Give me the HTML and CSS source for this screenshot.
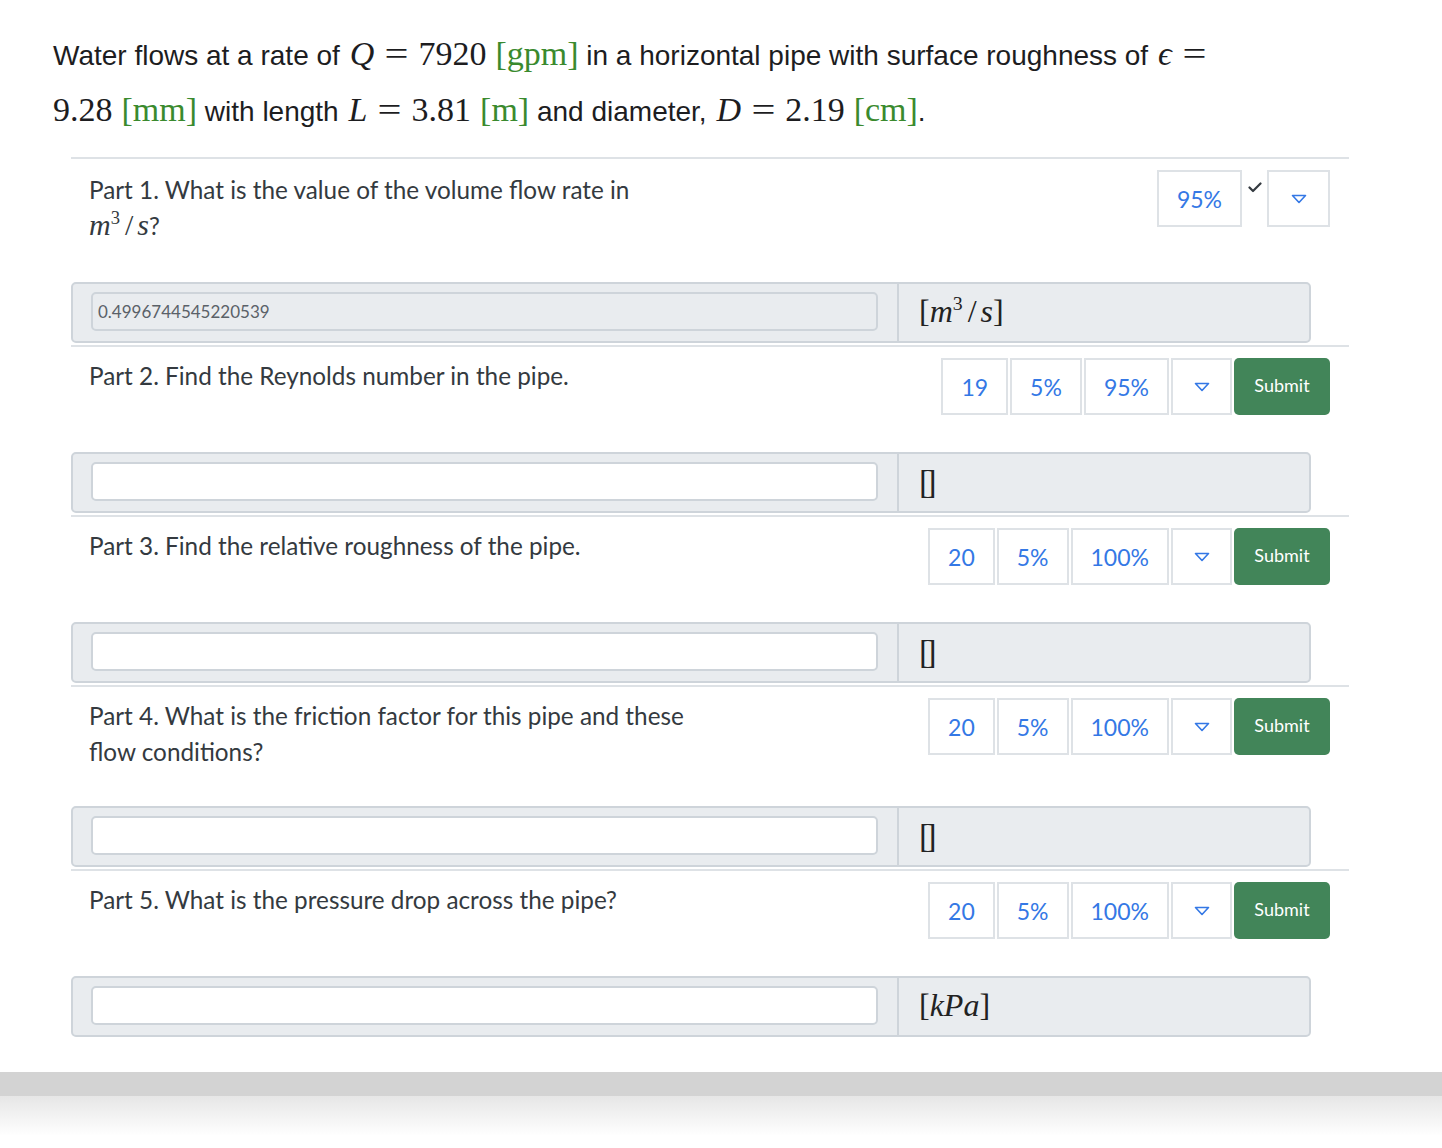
FILE: index.html
```html
<!DOCTYPE html>
<html>
<head>
<meta charset="utf-8">
<link rel="stylesheet" href="styles.css">
</head>
<body>
<div class="page">
  <p class="problem">Water flows at a rate of <span class="m"><i>Q</i><span class="op">=</span>7920<span class="sp"></span><span class="u">[gpm]</span></span> in a horizontal pipe with surface roughness of <span class="m"><i>ϵ</i><span class="op">=</span></span><br><span class="m">9.28<span class="sp"></span><span class="u">[mm]</span></span> with length <span class="m"><i>L</i><span class="op">=</span>3.81<span class="sp"></span><span class="u">[m]</span></span> and diameter, <span class="m"><i>D</i><span class="op">=</span>2.19<span class="sp"></span><span class="u">[cm]</span></span>.</p>

  <div class="parts">
    <section class="part">
      <div class="head">
        <div class="q q1">Part 1. What is the value of the volume flow rate in<br><span class="qm"><i>m</i><sup>3</sup><span class="sl">/</span><i>s</i></span>?</div>
        <div class="ctrl">
          <span class="cell">95%</span>
          <svg class="check" width="14" height="11" viewBox="0 0 14 11"><polyline points="1.5,5.5 5,9 12.5,1.5" fill="none" stroke="#343a40" stroke-width="2.2" stroke-linecap="round" stroke-linejoin="round"/></svg>
          <span class="cell dd"><svg width="16" height="10" viewBox="0 0 16 10"><polygon points="1.5,1.5 14.5,1.5 8,8.5" fill="none" stroke="#3478e5" stroke-width="1.6" stroke-linejoin="round"/></svg></span>
        </div>
      </div>
      <div class="ig">
        <div class="ig-left"><div class="inp dis">0.4996744545220539</div></div>
        <div class="ig-unit"><span class="um">[<i>m</i><sup>3</sup><span class="sl">/</span><i>s</i>]</span></div>
      </div>
    </section>

    <section class="part">
      <div class="head">
        <div class="q">Part 2. Find the Reynolds number in the pipe.</div>
        <div class="ctrl">
          <span class="cell grp">19</span><span class="cell grp">5%</span><span class="cell grp">95%</span><span class="cell grp dd2"><svg width="16" height="10" viewBox="0 0 16 10"><polygon points="1.5,1.5 14.5,1.5 8,8.5" fill="none" stroke="#3478e5" stroke-width="1.6" stroke-linejoin="round"/></svg></span><button class="submit">Submit</button>
        </div>
      </div>
      <div class="ig">
        <div class="ig-left"><div class="inp"></div></div>
        <div class="ig-unit"><span class="um empty">[]</span></div>
      </div>
    </section>

    <section class="part">
      <div class="head">
        <div class="q">Part 3. Find the relative roughness of the pipe.</div>
        <div class="ctrl">
          <span class="cell grp">20</span><span class="cell grp">5%</span><span class="cell grp">100%</span><span class="cell grp dd2"><svg width="16" height="10" viewBox="0 0 16 10"><polygon points="1.5,1.5 14.5,1.5 8,8.5" fill="none" stroke="#3478e5" stroke-width="1.6" stroke-linejoin="round"/></svg></span><button class="submit">Submit</button>
        </div>
      </div>
      <div class="ig">
        <div class="ig-left"><div class="inp"></div></div>
        <div class="ig-unit"><span class="um empty">[]</span></div>
      </div>
    </section>

    <section class="part">
      <div class="head">
        <div class="q">Part 4. What is the friction factor for this pipe and these<br>flow conditions?</div>
        <div class="ctrl">
          <span class="cell grp">20</span><span class="cell grp">5%</span><span class="cell grp">100%</span><span class="cell grp dd2"><svg width="16" height="10" viewBox="0 0 16 10"><polygon points="1.5,1.5 14.5,1.5 8,8.5" fill="none" stroke="#3478e5" stroke-width="1.6" stroke-linejoin="round"/></svg></span><button class="submit">Submit</button>
        </div>
      </div>
      <div class="ig">
        <div class="ig-left"><div class="inp"></div></div>
        <div class="ig-unit"><span class="um empty">[]</span></div>
      </div>
    </section>

    <section class="part">
      <div class="head">
        <div class="q">Part 5. What is the pressure drop across the pipe?</div>
        <div class="ctrl">
          <span class="cell grp">20</span><span class="cell grp">5%</span><span class="cell grp">100%</span><span class="cell grp dd2"><svg width="16" height="10" viewBox="0 0 16 10"><polygon points="1.5,1.5 14.5,1.5 8,8.5" fill="none" stroke="#3478e5" stroke-width="1.6" stroke-linejoin="round"/></svg></span><button class="submit">Submit</button>
        </div>
      </div>
      <div class="ig">
        <div class="ig-left"><div class="inp"></div></div>
        <div class="ig-unit"><span class="um">[<i>kPa</i>]</span></div>
      </div>
    </section>
  </div>
</div>
<div class="footer"></div>
<div class="fade"></div>
</body>
</html>
```

FILE: styles.css
```css
html, body {
  margin: 0;
  padding: 0;
  background: #fff;
}
.page {
  padding: 28px 0 0 53px;
  width: 1340px;
}
.problem {
  margin: 0 0 17px 0;
  font-family: "Liberation Sans", Arial, sans-serif;
  font-size: 28px;
  line-height: 56px;
  color: #1d1d1f;
  white-space: nowrap;
}
.m {
  font-family: "Liberation Serif", "Times New Roman", serif;
  font-size: 34px;
  line-height: 1;
  color: #1d1d1f;
}
.m i { font-style: italic; margin-left: 2px; }
.op {
  display: inline-block;
  transform: scaleX(1.25);
  margin: 0 12px 0 13px;
}
.sp { display: inline-block; width: 9px; }
.u { color: #3a8a2e; }

.parts {
  margin-left: 18px;
  width: 1278px;
}
.part {
  border-top: 2px solid #dee2e6;
}
.head {
  display: flex;
  justify-content: space-between;
  align-items: flex-start;
  padding-top: 11px;
}
.q {
  padding-left: 18px;
  font-family: Lato, "Noto Sans", sans-serif;
  font-size: 24.3px;
  line-height: 36px;
  color: #343a40;
  white-space: nowrap;
}
.q1 { padding-top: 2px; padding-bottom: 2px; }
.qm {
  font-family: "Liberation Serif", serif;
  font-size: 30px;
  line-height: 1;
}
.qm i, .um i { font-style: italic; }
.sl { margin: 0 4px 0 5px; font-style: normal; }
.qm sup, .um sup {
  font-size: 0.62em;
  font-style: normal;
  vertical-align: 0.6em;
  line-height: 0;
}
.ctrl {
  display: flex;
  align-items: flex-start;
  padding-right: 19px;
  height: 58px;
}
.cell {
  box-sizing: border-box;
  height: 57px;
  display: flex;
  align-items: center;
  justify-content: center;
  padding: 0 18px;
  border: 2px solid #dee2e6;
  font-family: Lato, "Noto Sans", sans-serif;
  font-size: 23px;
  color: #3478e5;
  background: #fff;
}
.grp { margin-right: 2px; }
.dd { width: 63px; padding: 0; }
.dd2 { width: 61px; padding: 0; }
.check { margin: 12px 5px 0 6px; }
.submit {
  box-sizing: border-box;
  height: 57px;
  width: 96px;
  border: none;
  border-radius: 5px;
  background: #428559;
  color: #fff;
  font-family: Lato, "Noto Sans", sans-serif;
  font-size: 18px;
  padding: 0 0 4px 0;
}

.ig {
  box-sizing: border-box;
  display: flex;
  width: 1240px;
  height: 61px;
  margin: 36px 0 2px 0;
  border: 2px solid #ced4da;
  border-radius: 5px;
  background: #e9ecef;
}
.ig-left {
  box-sizing: border-box;
  width: 826px;
  padding: 8px 19px 0 18px;
  border-right: 2px solid #ced4da;
}
.inp {
  box-sizing: border-box;
  height: 39px;
  border: 2px solid #ced4da;
  border-radius: 5px;
  background: #fff;
  font-family: Lato, "Noto Sans", sans-serif;
  font-size: 17px;
  color: #5a6168;
  line-height: 35px;
  padding-left: 5px;
}
.inp.dis { background: #e9ecef; }
.ig-unit {
  padding-left: 20px;
  display: flex;
  align-items: center;
}
.um {
  font-family: "Liberation Serif", serif;
  font-size: 32px;
  color: #222;
  padding-bottom: 2px;
}
.um.empty {
  letter-spacing: -5px;
  font-size: 34px;
}

.footer {
  margin-top: 35px;
  height: 24px;
  background: #d3d3d3;
}
.fade {
  height: 40px;
  background: linear-gradient(#e6e6e6, #ffffff);
}
```
